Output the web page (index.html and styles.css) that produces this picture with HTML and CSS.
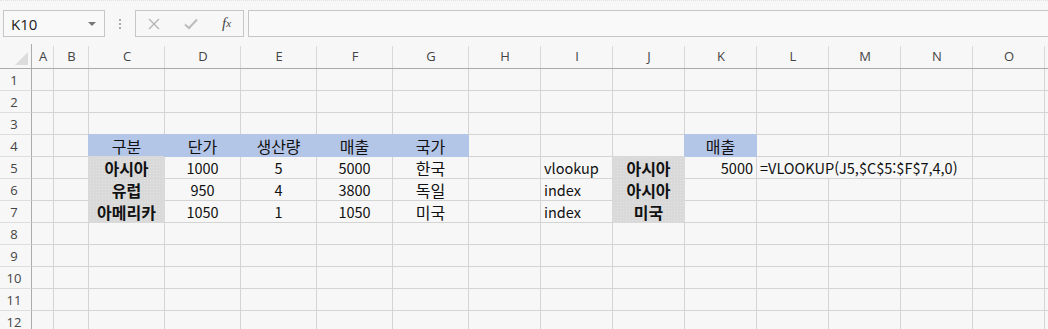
FILE: index.html
```html
<!DOCTYPE html>
<html lang="ko">
<head>
    <meta charset="UTF-8">
    <meta name="viewport" content="width=device-width, initial-scale=1.0">
    <title>vlookup 연습</title>
    <link rel="stylesheet" href="styles.css">
</head>
<body>
    <div class="toolbar">
        <div class="namebox">
            <span>K10</span>
            <span class="caret"></span>
        </div>
        <div class="dots"><i></i><i></i><i></i></div>
        <div class="fnbox">
            <svg class="ico" width="12" height="12" viewBox="0 0 12 12">
                <path d="M1 1 L11 11 M11 1 L1 11" stroke="#b4b4b4" stroke-width="1.3" fill="none"/>
            </svg>
            <svg class="ico" width="14" height="12" viewBox="0 0 14 12">
                <path d="M1 6.5 L5 10 L13 1.5" stroke="#bcbcbc" stroke-width="2" fill="none"/>
            </svg>
            <span class="fx">f<sub>x</sub></span>
        </div>
        <div class="formula"></div>
    </div>

    <div class="sheet" id="sheet"></div>

    <script>
        let cols = ["A", "B", "C", "D", "E", "F", "G", "H", "I", "J", "K", "L", "M", "N", "O"];

        // 셀 내용: [텍스트, 클래스]
        let data = {
            C4: ["구분", "hd c"], D4: ["단가", "hd c"], E4: ["생산량", "hd c"], F4: ["매출", "hd c"], G4: ["국가", "hd c"],
            K4: ["매출", "hd c"],
            C5: ["아시아", "key c"], D5: ["1000", "c"], E5: ["5", "c"], F5: ["5000", "c"], G5: ["한국", "c"],
            I5: ["vlookup", "l"], J5: ["아시아", "key c"], K5: ["5000", "r"],
            L5: ["=VLOOKUP(J5,$C$5:$F$7,4,0)", "l span3"],
            C6: ["유럽", "key c"], D6: ["950", "c"], E6: ["4", "c"], F6: ["3800", "c"], G6: ["독일", "c"],
            I6: ["index", "l"], J6: ["아시아", "key c"],
            C7: ["아메리카", "key c"], D7: ["1050", "c"], E7: ["1", "c"], F7: ["1050", "c"], G7: ["미국", "c"],
            I7: ["index", "l"], J7: ["미국", "key c"]
        };

        let html = `<div class="corner"><span class="tri"></span></div>`;
        for (let c of cols) {
            html += `<div class="colhead">${c}</div>`;
        }
        html += `<div class="colhead end"></div>`;

        for (let r = 1; r <= 12; r++) {
            html += `<div class="rowhead">${r}</div>`;
            let skip = 0;
            for (let c of cols) {
                if (skip > 0) { skip--; continue; }
                let cell = data[c + r];
                if (cell) {
                    if (cell[1].includes("span3")) skip = 2;
                    let ko = /[가-힣]/.test(cell[0]) ? " ko" : "";
                    html += `<div class="cell ${cell[1]}${ko}"><span>${cell[0]}</span></div>`;
                } else {
                    html += `<div class="cell"></div>`;
                }
            }
            html += `<div class="cell end"></div>`;
        }
        document.getElementById("sheet").innerHTML = html;
    </script>
</body>
</html>
```

FILE: styles.css
```css
body {
    margin: 0;
    background: #f7f7f7;
    font-family: "Noto Sans CJK KR", "Noto Sans", sans-serif;
    overflow: hidden;
}
.toolbar {
    height: 44px;
    box-sizing: border-box;
    padding: 9px 0 0 3px;
    display: flex;
    align-items: flex-start;
    border-top: 1px dotted #e2e2e2;
}
.namebox {
    width: 102px;
    height: 27px;
    box-sizing: border-box;
    border: 1px solid #c6c6c6;
    background: #f9f9f9;
    display: flex;
    align-items: center;
    justify-content: space-between;
    padding: 0 8px 0 7px;
    font-family: "Open Sans", sans-serif;
    font-size: 15px;
    color: #222;
}
.caret {
    width: 0;
    height: 0;
    border-left: 4px solid transparent;
    border-right: 4px solid transparent;
    border-top: 4px solid #777;
}
.dots {
    width: 30px;
    height: 27px;
    display: flex;
    flex-direction: column;
    align-items: center;
    justify-content: center;
    gap: 2px;
}
.dots i {
    width: 2px;
    height: 2px;
    background: #aaa;
}
.fnbox {
    width: 109px;
    height: 27px;
    box-sizing: border-box;
    border: 1px solid #c6c6c6;
    display: flex;
    align-items: center;
    padding: 0 8px 0 12px;
}
.fnbox .ico:nth-child(1) {
    margin-right: 24px;
}
.fnbox .ico:nth-child(2) {
    margin-right: 24px;
}
.fx {
    font-family: "Liberation Serif", serif;
    font-style: italic;
    font-size: 15px;
    color: #444;
    line-height: 1;
}
.fx sub {
    font-size: 11px;
    vertical-align: 1px;
}
.formula {
    flex: 1;
    height: 27px;
    box-sizing: border-box;
    margin-left: 4px;
    border: 1px solid #c6c6c6;
    border-right: none;
    background: #f9f9f9;
}
.sheet {
    display: grid;
    grid-template-columns: 32px 22px 35px repeat(5, 76px) repeat(8, 72px) 1fr;
    grid-template-rows: 25px;
    grid-auto-rows: 22px;
}
.corner {
    position: relative;
    border-right: 1px solid #ababab;
    border-bottom: 1px solid #ababab;
}
.tri {
    position: absolute;
    right: 3px;
    bottom: 3px;
    width: 0;
    height: 0;
    border-left: 13px solid transparent;
    border-bottom: 13px solid #dcdcdc;
}
.colhead {
    border-bottom: 1px solid #ababab;
    display: flex;
    align-items: center;
    justify-content: center;
    font-family: "Open Sans", sans-serif;
    font-size: 13px;
    color: #444;
    position: relative;
}
.colhead::after {
    content: "";
    position: absolute;
    right: 0;
    top: 2px;
    bottom: 0;
    width: 1px;
    background: #dadada;
}
.colhead.end::after {
    display: none;
}
.rowhead {
    border-right: 1px solid #ababab;
    border-bottom: 1px solid #dedede;
    display: flex;
    align-items: center;
    justify-content: center;
    padding-right: 3px;
    font-family: "Open Sans", sans-serif;
    font-size: 13px;
    color: #444;
}
.cell {
    border-right: 1px solid #d4d4d4;
    border-bottom: 1px solid #d4d4d4;
    display: flex;
    align-items: center;
    padding: 0 3px;
    font-size: 14.5px;
    color: #111;
    white-space: nowrap;
    min-width: 0;
}
.cell.ko {
    font-size: 16px;
}
.cell.end {
    border-right: none;
}
.c {
    justify-content: center;
}
.r {
    justify-content: flex-end;
}
.l {
    justify-content: flex-start;
}
.span3 {
    grid-column: span 3;
}
.hd {
    background: #b4c6e7;
    border-color: #b4c6e7;
    box-shadow: -1px -1px 0 0 #b4c6e7;
}
.key {
    font-weight: bold;
    background-color: #d9d9d9;
    background-image: radial-gradient(circle, #e3e3e3 0.5px, transparent 0.8px);
    background-size: 3px 3px;
    border-color: #d9d9d9;
    box-shadow: -1px -1px 0 0 #d9d9d9;
}
```
